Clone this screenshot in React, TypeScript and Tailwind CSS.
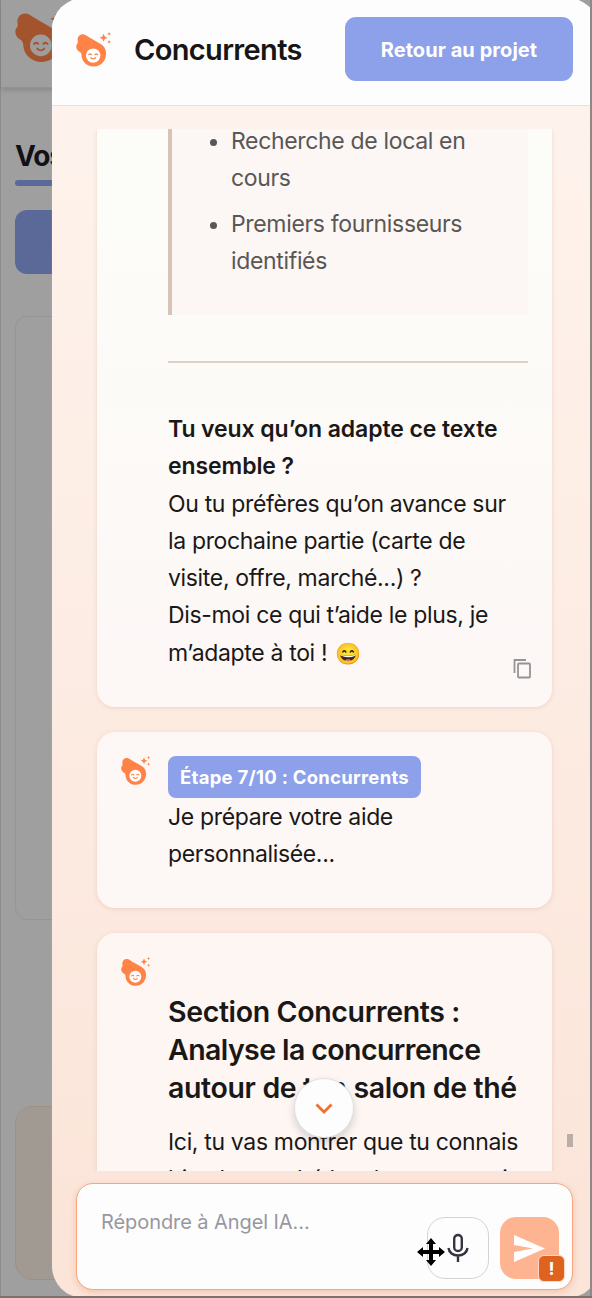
import React from 'react';

const FONT = "font-['Inter','Noto_Color_Emoji',sans-serif]";

function Logo({ className = '', face = '#ffffff' }: { className?: string; face?: string }) {
  return (
    <svg className={`shrink-0 ${className}`} viewBox="0 0 36 36" fill="none">
      <path
        d="M1.600 8.300C1.200 4.400 4.600 1.500 8.100 2.500C10.100 3 11.100 4.200 12.600 5L24.300 11.800C28.100 14 30.300 17.500 30.100 22C29.900 29 24.600 34.600 17.900 34.600C11.100 34.600 6 30 5.500 23.600C5.400 22.200 5.300 21.200 4.300 20.300C0.300 18.500 -1 14 1.500 11.300C2.100 10.600 1.800 9.600 1.600 8.300Z"
        fill="#ff8347"
      />
      <circle cx="17.200" cy="23.600" r="7.200" fill={face} />
      <path
        d="M12.700 22.600Q14 21.100 15.500 22.600M18.900 22.600Q20.300 21.100 21.700 22.600M14.900 25.700Q17.200 28.100 19.500 25.700"
        stroke="#ff8347"
        strokeWidth="1.300"
        strokeLinecap="round"
      />
      <path d="M27.600 1.800L28.800 4.600L31.600 5.800L28.800 7L27.600 9.800L26.400 7L23.600 5.800L26.400 4.600Z" fill="#ff8347" />
      <path d="M33.100 0L33.700 1.300L35 1.900L33.700 2.500L33.100 3.800L32.500 2.500L31.200 1.900L32.500 1.300Z" fill="#ff8347" />
      <path d="M33.100 8L33.700 9.300L35 9.900L33.700 10.500L33.100 11.800L32.500 10.500L31.200 9.900L32.500 9.300Z" fill="#ff8347" />
    </svg>
  );
}

function PageBehind() {
  return (
    <div className="h-full w-full border-l border-[#8d8d8d] bg-[#9f9f9f]">
      <div className="h-[88px] border-b border-[#929292] pl-[14px] pt-[10px] shadow-[0_2px_5px_rgba(0,0,0,0.15)]">
        <Logo className="h-[54px] w-[54px] brightness-[0.640]" face="#f5f5f5" />
      </div>
      <div className="pl-[14px] pt-[53px]">
        <h2 className="text-[28px] font-bold leading-[30px] tracking-[-1px] text-[#101018]">Vos projets</h2>
        <div className="mt-[9px] h-[6px] w-40 rounded-full bg-[#5b6998]" />
        <div className="mt-[24px] h-[64px] w-60 rounded-[12px] bg-[#5b6998] pl-[36px] text-[20px] font-bold leading-[64px] text-[#9f9f9f]">
          Ajouter
        </div>
        <div className="mt-[42px] h-[604px] w-80 rounded-[12px] border border-[#959597]" />
        <div className="mt-[186px] h-[174px] w-80 rounded-[18px] border border-[#a08f84] bg-[#a09a93]" />
      </div>
    </div>
  );
}

function Header() {
  return (
    <header className="flex h-[106px] shrink-0 items-start border-b border-[#e2e2e2] bg-[#fdfdfd] pl-6">
      <Logo className="mt-[32px] h-[36px] w-[36px]" />
      <h1 className="ml-[22px] mt-[31px] w-[211px] whitespace-nowrap text-[29px] font-semibold leading-[38px] tracking-[-0.650px] text-[#171515]">
        Concurrents
      </h1>
      <button className="mt-[17px] h-[64px] w-[228px] rounded-[11px] bg-[#8ca1ea] pt-[1px] text-[20px] font-bold tracking-[0.060px] text-white">
        Retour au projet
      </button>
    </header>
  );
}

function DraftCard() {
  return (
    <section className="relative h-[578px] w-[455px] shrink-0 rounded-b-[18px] bg-gradient-to-b from-[#fcfdf9] to-[#fdf7f6] pl-[71px] shadow-[0_1px_4px_rgba(190,140,120,0.25)]">
      <blockquote className="h-[186px] w-[360px] border-l-4 border-[#d8c3b8] bg-[#fcf6f5] pl-[59px] text-[#595755]">
        <ul className="relative -top-[6px] list-disc space-y-[8px] whitespace-nowrap">
          <li>
            Recherche de local en
            <br />
            cours
          </li>
          <li>
            Premiers fournisseurs
            <br />
            identifiés
          </li>
        </ul>
      </blockquote>
      <div className="mt-[46px] h-[2px] w-[360px] bg-[#dfcfc5]" />
      <p className="mt-[48px] whitespace-nowrap">
        <strong className="font-semibold tracking-[-0.090px]">
          Tu veux qu’on adapte ce texte
          <br />
          ensemble ?
        </strong>
        <br />
        Ou tu préfères qu’on avance sur
        <br />
        la prochaine partie (carte de
        <br />
        visite, offre, marché...) ?
        <br />
        Dis-moi ce qui t’aide le plus, je
        <br />
        m’adapte à toi ! <span className="ml-[2px] text-[21px] leading-none">😄</span>
      </p>
      <svg className="absolute bottom-[28px] right-[20px] h-[21px] w-[19px]" viewBox="0 0 19 21" fill="none" stroke="#929497" strokeWidth="1.800">
        <path d="M1.500 15V2H13" />
        <rect x="5" y="5.500" width="12" height="14" rx="1" />
      </svg>
    </section>
  );
}

function StepCard() {
  return (
    <section className="flex h-[176px] w-[455px] shrink-0 rounded-[18px] bg-[#fdf7f5] pl-6 pt-6 shadow-[0_1px_4px_rgba(190,140,120,0.25)]">
      <Logo className="h-[30px] w-[30px]" />
      <div className="ml-[17px] whitespace-nowrap">
        <span className="mb-[1px] block h-[42px] w-[253px] rounded-[8px] bg-[#8ca1ea] text-center text-[18.500px] font-bold leading-[42px] tracking-[0.270px] text-white">
          Étape 7/10 : Concurrents
        </span>
        <p>
          Je prépare votre aide
          <br />
          personnalisée...
        </p>
      </div>
    </section>
  );
}

function CompetitorsCard() {
  return (
    <section className="flex h-[400px] w-[455px] shrink-0 rounded-[18px] bg-[#fef6f3] pl-6 pt-6 shadow-[0_1px_4px_rgba(190,140,120,0.25)]">
      <Logo className="h-[30px] w-[30px]" />
      <div className="ml-[17px] whitespace-nowrap pt-[36px]">
        <h2 className="text-[28.500px] font-semibold leading-[38px] tracking-[-0.360px]">
          Section Concurrents :
          <br />
          <span className="tracking-[-0.580px]">Analyse la concurrence</span>
          <br />
          autour de ton salon de thé
        </h2>
        <p className="mt-[17px]">
          Ici, tu vas montrer que tu connais
          <br />
          bien le marché local, et ceux qui
        </p>
      </div>
    </section>
  );
}

function Composer() {
  return (
    <div className="relative mx-6 mt-[12px] flex h-[107px] w-[497px] shrink-0 rounded-[17px] border-[1.500px] border-[#f9a57d] bg-[#fdfdfd] shadow-[0_2px_6px_rgba(220,120,70,0.3)]">
      <span className="ml-[24px] mt-[25px] w-[326px] text-[20px] leading-[26px] tracking-[-0.080px] text-[#9797a0]">Répondre à Angel IA...</span>
      <button className="mt-[33px] flex h-[62px] w-[62px] items-center justify-center rounded-[18px] border-[1.500px] border-[#d2d2d9]">
        <svg className="h-[30px] w-[24px]" viewBox="0 0 24 30" fill="none" stroke="#343442" strokeWidth="2.400">
          <rect x="8.200" y="2" width="7.600" height="16" rx="3.800" />
          <path d="M2.500 15C3 19.500 7 22.500 12 22.500S21 19.500 21.500 15M12 22.500V29" />
        </svg>
      </button>
      <button className="relative ml-[11px] mt-[33px] h-[62px] w-[59px] rounded-[16px] bg-[#feb491]">
        <svg className="ml-[14px] h-[27px] w-[31px]" viewBox="0 0 31 27" fill="#ffffff">
          <path d="M0 0L31 13.500L0 27V17L19 13.500L0 10Z" />
        </svg>
        <span className="absolute -bottom-[3px] -right-[6px] flex h-[27px] w-[27px] items-center justify-center rounded-[6px] border-[1.500px] border-[#fcd9c8] bg-[#e0621f] text-[18px] font-bold text-white">
          !
        </span>
      </button>
      <svg className="absolute left-[340px] top-[54px] h-[28px] w-[28px]" viewBox="0 0 28 28" fill="#000000">
        <path d="M14 0L19 6H16V12H22V9L28 14L22 19V16H16V22H19L14 28L9 22H12V16H6V19L0 14L6 9V12H12V6H9Z" />
      </svg>
    </div>
  );
}

export default function App() {
  return (
    <div className={`relative h-[1298px] w-[592px] overflow-hidden ${FONT}`}>
      <PageBehind />
      <div className="absolute -top-[2px] left-[52px] flex h-[1300px] w-[547px] flex-col overflow-hidden rounded-[32px] bg-gradient-to-b from-[#fef4ee] to-[#fbe4d8] pt-[2px] shadow-[0_0_1px_#cdc5c1]">
        <Header />
        <div className="relative mt-[23px] h-[1042px] shrink-0">
          <main className="flex h-full flex-col gap-[25px] overflow-hidden pl-[45px] text-[23px] leading-[37.300px] tracking-[-0.340px] text-[#1a1817]">
            <DraftCard />
            <StepCard />
            <CompetitorsCard />
          </main>
          <div className="absolute left-[515px] top-[1005px] h-[13px] w-[6px] bg-[#b9aea8]" />
          <button className="absolute left-[242px] top-[949px] flex h-[60px] w-[60px] items-center justify-center rounded-full border border-[#dfe0e5] bg-[#fdfdfd] shadow-[0_4px_8px_rgba(0,0,0,0.16)]">
            <svg className="h-[11px] w-[18px]" viewBox="0 0 18 11" fill="none" stroke="#f36d2d" strokeWidth="2.800">
              <path d="M1.500 1.500L9 9L16.500 1.500" />
            </svg>
          </button>
        </div>
        <Composer />
      </div>
      <div className="absolute right-0 top-0 h-full w-[2px] bg-[#8f8985]" />
      <div className="absolute bottom-0 left-0 h-[2px] w-full bg-[#777270]" />
    </div>
  );
}
